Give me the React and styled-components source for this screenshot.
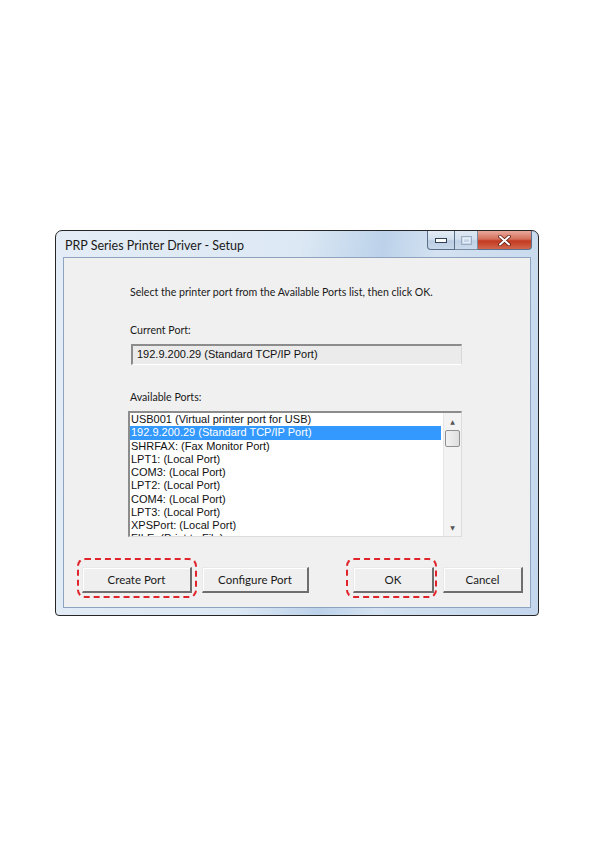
import React from 'react';
import styled, { createGlobalStyle } from 'styled-components';

const GlobalStyle = createGlobalStyle`
  html, body {
    margin: 0;
    padding: 0;
    background: #ffffff;
  }
  body {
    font-family: Lato, "Liberation Sans", sans-serif;
  }
`;

const Page = styled.div`
  width: 595px;
  height: 842px;
  padding: 230px 0 0 55px;
  box-sizing: border-box;
`;

const Window = styled.div`
  width: 484px;
  height: 386px;
  box-sizing: border-box;
  border: 1px solid #262626;
  border-radius: 7px 7px 4px 4px;
  padding: 0 7px 7px;
  background: linear-gradient(100deg, #e4edf7 0%, #dce8f4 45%, #bcd2ea 60%, #d4e2f1 70%, #c3d6ec 100%);
  display: flex;
  flex-direction: column;
`;

const TitleBar = styled.div`
  height: 26px;
  display: flex;
  align-items: flex-start;
  justify-content: space-between;
`;

const Title = styled.span`
  font-family: Lato, "Liberation Sans", sans-serif;
  font-size: 12.5px;
  line-height: 14px;
  color: #1a1a1a;
  padding: 8px 0 0 2px;
`;

const CaptionGroup = styled.div`
  display: flex;
  margin-right: -1px;
`;

const CaptionButton = styled.div`
  width: ${p => p.w}px;
  height: 19px;
  box-sizing: border-box;
  border: 1px solid #5a6f8a;
  border-top: none;
  border-left: ${p => (p.first ? '1px solid #5a6f8a' : 'none')};
  border-radius: ${p => p.radius || '0'};
  background: ${p =>
    p.close
      ? 'linear-gradient(#e9a99b 0%, #d4705c 45%, #c3391f 55%, #d2674f 100%)'
      : 'linear-gradient(#e3ebf5 0%, #d4e0ee 45%, #bccde3 55%, #c9d8ea 100%)'};
  display: flex;
  align-items: center;
  justify-content: center;
  opacity: ${p => (p.dim ? 0.75 : 1)};
`;

const Client = styled.div`
  flex: 1;
  background: #f0f0f0;
  border: 1px solid #8da3bf;
  display: flex;
  flex-direction: column;
  padding-top: 27px;
`;

const Column = styled.div`
  margin-left: 64px;
  width: 334px;
  display: flex;
  flex-direction: column;
`;

const Text = styled.div`
  font-family: Lato, "Liberation Sans", sans-serif;
  font-size: 10.6px;
  line-height: 14px;
  color: #1a1a1a;
  padding-left: 2px;
  margin-top: ${p => p.mt || 0}px;
  white-space: nowrap;
`;

const ReadOnlyBox = styled.div`
  margin: 7px 0 0 3px;
  width: 331px;
  height: 21px;
  box-sizing: border-box;
  background: #ebebeb;
  border-top: 2px solid #8c8c8c;
  border-left: 2px solid #8c8c8c;
  border-right: 1px solid #d8d8d8;
  border-bottom: 1px solid #ffffff;
  font-family: "Liberation Sans", Arial, sans-serif;
  font-size: 11px;
  line-height: 17px;
  padding-left: 4px;
  color: #111;
`;

const ListBox = styled.div`
  margin-top: 7px;
  width: 334px;
  height: 126px;
  box-sizing: border-box;
  background: #fff;
  border-top: 2px solid #8c8c8c;
  border-left: 2px solid #8c8c8c;
  border-right: 1px solid #dcdcdc;
  border-bottom: 1px solid #dcdcdc;
  display: flex;
  overflow: hidden;
`;

const Items = styled.div`
  flex: 1;
  padding-right: 2px;
  overflow: hidden;
`;

const Item = styled.div`
  height: 13.25px;
  line-height: 13.25px;
  padding-left: 1px;
  font-family: "Liberation Sans", Arial, sans-serif;
  font-size: 11px;
  white-space: nowrap;
  color: ${p => (p.selected ? '#ffffff' : '#111')};
  background: ${p => (p.selected ? '#3399ff' : 'transparent')};
`;

const ScrollBar = styled.div`
  width: 17px;
  background: #f3f3f3;
  border-left: 1px solid #e6e6e6;
  display: flex;
  flex-direction: column;
  align-items: center;
`;

const Arrow = styled.div`
  height: 17px;
  display: flex;
  align-items: center;
  justify-content: center;
  font-size: 6px;
  color: #555;
  font-family: "DejaVu Sans", sans-serif;
`;

const Thumb = styled.div`
  width: 15px;
  height: 17px;
  box-sizing: border-box;
  border: 1px solid #8f8f8f;
  border-radius: 2px;
  background: linear-gradient(90deg, #f2f2f2, #dedede);
`;

const Track = styled.div`
  flex: 1;
`;

const ButtonRow = styled.div`
  margin-top: auto;
  margin-bottom: 14px;
  padding: 0 7px 0 18px;
  display: flex;
  justify-content: space-between;
`;

const Group = styled.div`
  display: flex;
  gap: ${p => p.gap}px;
`;

const Highlight = styled.div`
  position: relative;
  &::after {
    content: '';
    position: absolute;
    top: -9px;
    bottom: -5px;
    left: ${p => p.l}px;
    right: ${p => p.r}px;
    border: 2px dashed #e0242c;
    border-radius: 8px;
    pointer-events: none;
  }
`;

const Button = styled.button`
  width: ${p => p.w}px;
  height: 26px;
  box-sizing: border-box;
  margin: 0;
  padding: 0;
  background: #efefef;
  border: 1px solid #e9e9e9;
  border-right: 2px solid #6e6e6e;
  border-bottom: 2px solid #6e6e6e;
  box-shadow: inset 1px 1px 0 #ffffff;
  font-family: Lato, "Liberation Sans", sans-serif;
  font-size: 11.5px;
  color: #1a1a1a;
`;

const ports = [
  'USB001 (Virtual printer port for USB)',
  '192.9.200.29 (Standard TCP/IP Port)',
  'SHRFAX: (Fax Monitor Port)',
  'LPT1: (Local Port)',
  'COM3: (Local Port)',
  'LPT2: (Local Port)',
  'COM4: (Local Port)',
  'LPT3: (Local Port)',
  'XPSPort: (Local Port)',
  'FILE: (Print to File)',
];

const App = () => {
  return (
    <Page>
      <GlobalStyle />
      <Window>
        <TitleBar>
          <Title>PRP Series Printer Driver - Setup</Title>
          <CaptionGroup>
            <CaptionButton w={28} first radius="0 0 0 4px">
              <svg width="12" height="5" viewBox="0 0 12 5">
                <rect x="0.5" y="0.5" width="11" height="4" fill="#fff" stroke="#2f3f55" />
              </svg>
            </CaptionButton>
            <CaptionButton w={23} dim>
              <svg width="11" height="9" viewBox="0 0 11 9">
                <rect x="0.5" y="0.5" width="10" height="8" fill="none" stroke="#8a9cb4" />
                <rect x="2.5" y="2.5" width="6" height="4" fill="none" stroke="#eef3f9" />
              </svg>
            </CaptionButton>
            <CaptionButton w={54} close radius="0 0 4px 0">
              <svg width="13" height="11" viewBox="0 0 13 11">
                <path d="M2 1.5 L11 9.5 M11 1.5 L2 9.5" stroke="#5a1a10" strokeWidth="3.6" strokeLinecap="round" />
                <path d="M2 1.5 L11 9.5 M11 1.5 L2 9.5" stroke="#ffffff" strokeWidth="2" strokeLinecap="round" />
              </svg>
            </CaptionButton>
          </CaptionGroup>
        </TitleBar>
        <Client>
          <Column>
            <Text>Select the printer port from the Available Ports list, then click OK.</Text>
            <Text mt={24}>Current Port:</Text>
            <ReadOnlyBox>192.9.200.29 (Standard TCP/IP Port)</ReadOnlyBox>
            <Text mt={25}>Available Ports:</Text>
            <ListBox>
              <Items>
                {ports.map((p, i) => (
                  <Item key={p} selected={i === 1}>
                    {p}
                  </Item>
                ))}
              </Items>
              <ScrollBar>
                <Arrow>▲</Arrow>
                <Thumb />
                <Track />
                <Arrow>▼</Arrow>
              </ScrollBar>
            </ListBox>
          </Column>
          <ButtonRow>
            <Group gap={10}>
              <Highlight l={-5} r={-5}>
                <Button w={110}>Create Port</Button>
              </Highlight>
              <Button w={107}>Configure Port</Button>
            </Group>
            <Group gap={9}>
              <Highlight l={-7} r={-3}>
                <Button w={81}>OK</Button>
              </Highlight>
              <Button w={80}>Cancel</Button>
            </Group>
          </ButtonRow>
        </Client>
      </Window>
    </Page>
  );
};

export default App;
